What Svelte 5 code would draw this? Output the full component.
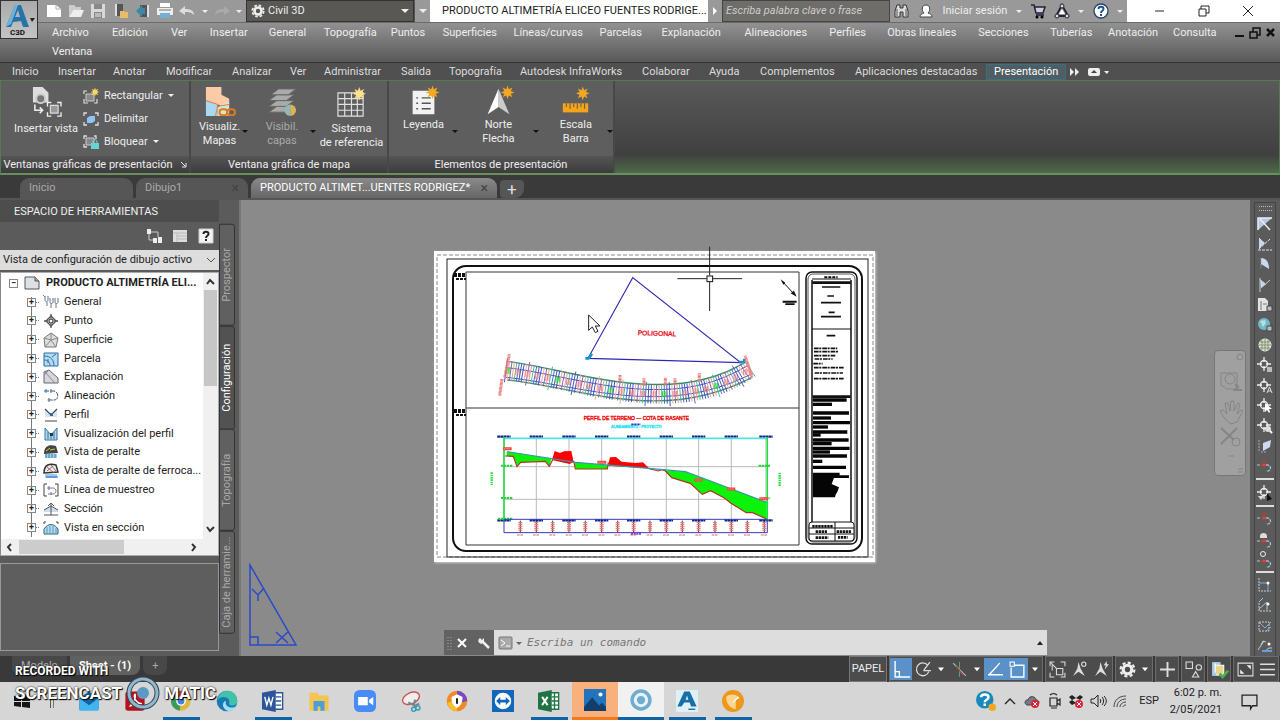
<script>
  const menus = ['Archivo', 'Edición', 'Ver', 'Insertar', 'General', 'Topografía', 'Puntos', 'Superficies', 'Líneas/curvas', 'Parcelas', 'Explanación', 'Alineaciones', 'Perfiles', 'Obras lineales', 'Secciones', 'Tuberías', 'Anotación', 'Consulta'];
  const ribbonTabs = ['Inicio', 'Insertar', 'Anotar', 'Modificar', 'Analizar', 'Ver', 'Administrar', 'Salida', 'Topografía', 'Autodesk InfraWorks', 'Colaborar', 'Ayuda', 'Complementos', 'Aplicaciones destacadas'];
  const quick = ['new', 'open', 'save', 'openweb', 'saveweb', 'print', 'undo', 'redo'];

  const tree = [
    ['General', 'general'],
    ['Punto', 'punto'],
    ['Superficie', 'superficie'],
    ['Parcela', 'parcela'],
    ['Explanación', 'explanacion'],
    ['Alineación', 'alineacion'],
    ['Perfil', 'perfil'],
    ['Visualización del perfil', 'visperfil'],
    ['Vista de peralte', 'peralte'],
    ['Vista de peralte de ferroca...', 'ferro'],
    ['Línea de muestreo', 'muestreo'],
    ['Sección', 'seccion'],
    ['Vista en sección', 'vseccion'],
  ];
  const sideTabs = ['Prospector', 'Configuración', 'Topografía', 'Caja de herramie...'];

  const tools = ['t1', 't2', 't3', 't4', 'tdoc', 'tearth', 'tglobe', 'pt1', 'pt2', 'pt3', 'pt4', 'tpen', 'arc', '-', 'pt5', '-', 'arc', 'arc2', 'arc3', '-', 'box1', 'box2', 'box3', 'box4'];

  const status = [
    [['ortho', 1], ['polar'], ['caret'], ['iso'], ['caret'], ['otrack', 1], ['osnap', 1], ['caret']],
    [['ascale'], ['avis'], ['aauto']],
    [['gear'], ['caret']],
    [['plus']],
    [['shapes']],
    [['perf']],
    [['full'], ['menu']],
  ];

  const apps = [
    ['mail', 'Correo', ''],
    ['pdf', 'Acrobat', ''],
    ['chrome', 'Chrome', 'run'],
    ['edge', 'Edge', ''],
    ['word', 'Word', 'run'],
    ['folder', 'Explorador', ''],
    ['zoom', 'Zoom', ''],
    ['snip', 'Recortes', ''],
    ['shield', 'Avast', ''],
    ['team', 'TeamViewer', ''],
    ['excel', 'Excel', 'run'],
    ['photos', 'Fotos', 'alert'],
    ['rec', 'Grabadora', 'front'],
    ['acad', 'Civil 3D', 'run'],
    ['gold', 'Monitor', 'run'],
  ];
  const tray = ['help', 'chev', 'cloud', 'meet', 'dropbox', 'volume', 'wifi'];

  const star = (x, y, r, c) => {
    let d = '';
    for (let i = 0; i < 16; i++) {
      const k = i % 2 ? r * 0.5 : r;
      const a = (i * Math.PI) / 8;
      d += `${x + k * Math.sin(a)},${y - k * Math.cos(a)} `;
    }
    return `<polygon points="${d}" fill="${c}"/>`;
  };
  const target = '<g fill="none" stroke="#eee" stroke-width="1.3"><circle cx="7" cy="7" r="3.5"/><path d="M7 0v5M7 9v5M0 7h5M9 7h5"/></g>';
  const arc = '<path d="M0 7h4M9 7c6-1 6 7 0 6" fill="none" stroke="#b8c4d4" stroke-width="1.2" stroke-dasharray="3 1"/><path d="M5 7h4" stroke="#e03c3c" stroke-width="2.5"/>';

  // All icons share a 16x16 box
  const icons = {
    new: '<path d="M1 2h9l5 4v8H1z" fill="#fff"/><path d="M10 2v4h5" fill="none" stroke="#aaa"/>',
    open: '<path d="M1 14V2h5l2 2h5v3H5z" fill="#ccc"/><path d="M5 7h11l-3 7H1z" fill="#eee"/>',
    save: '<path d="M1 1h14v14H1z" fill="#d8d8d8"/><path d="M4 1h8v5H4zM4 9h8v6H4z" fill="#888"/><path d="M5 11h6M5 13h6" stroke="#eee"/>',
    openweb: '<path d="M2 1h8v12H2z" fill="#555"/><path d="M2 1h2v12H2z" fill="#ddd"/><path d="M7 8h4l1 1h3v6H7z" fill="#e9bc68"/>',
    saveweb: '<path d="M5 2h9v12H5z" fill="#555"/><path d="M12 2h2v12h-2z" fill="#ddd"/><path d="M1 8l6-6v3h3v6H7v3z" fill="#3d88a8"/>',
    print: '<path d="M3 0h10v4H3z" fill="#fff"/><path d="M0 5h16v7H0z" fill="#eee"/><path d="M2 7h12" stroke="#777"/><path d="M3 10h10v5H3z" fill="#75afd5"/>',
    undo: '<path d="M0 8l6-5v3c6 0 9 2 9 6-3-3-5-3-9-3v3z" fill="#ddd"/>',
    redo: '<path d="M16 8l-6-5v3c-6 0-9 2-9 6 3-3 5-3 9-3v3z" fill="#aaa"/>',
    gear: '<circle cx="8" cy="8" r="4" fill="none" stroke="#eee" stroke-width="3"/><circle cx="8" cy="8" r="6.5" fill="none" stroke="#eee" stroke-width="2" stroke-dasharray="3 2.1"/>',
    caret: '<path d="M4 6h8l-4 5z" fill="#fff"/>',
    bino: '<path d="M3 2h3v3h3V2h3l2 6v6H9V9H6v5H1V8z" fill="#ddd" stroke="#333"/><path d="M3 6v7M12 6v7" stroke="#555"/>',
    user: '<path d="M2 14c0-3 2-3 4-4-3-3-2-8 2-8s5 5 2 8c2 1 4 1 4 4z" fill="#fff" stroke="#444"/>',
    cart: '<path d="M1 2h3l2 8h7l2-6H5M6 12h8" fill="#ccd" stroke="#223" stroke-width="1.5"/><circle cx="7" cy="14" r="1.5"/><circle cx="12" cy="14" r="1.5"/>',
    triad: '<path d="M8 2l6 11H2z" fill="none" stroke="#223" stroke-width="1.8"/><path d="M8 6l3 5H5z" fill="#fff"/><circle cx="8" cy="3" r="2" fill="#ddd" stroke="#223"/><circle cx="3" cy="13" r="2" fill="#ddd" stroke="#223"/><circle cx="13" cy="13" r="2" fill="#ddd" stroke="#223"/>',
    ask: '<circle cx="8" cy="8" r="7" fill="#fff" stroke="#24456d" stroke-width="1.3"/><path d="M5.500 6c0-3 5-3 5 0 0 2-2.500 1.500-2.500 4M8 11v2" fill="none" stroke="#1e4f8e" stroke-width="2"/>',
    addview: '<path d="M1 0h5l3 3v5H1z" fill="#ddd"/><circle cx="5" cy="6" r="2.300" fill="#777" stroke="#ccc"/><path d="M2 9v3h4M4.500 10.500L6 12l-1.500 1.500" fill="none" stroke="#eee" stroke-width=".8"/><path d="M10 9.500h4v4h-4z" fill="#999" stroke="#ddd" stroke-width=".6"/><path d="M8.500 10V8h2M13.500 8h2v2M15.500 13v2h-2M10.500 15h-2v-2" fill="none" stroke="#eee" stroke-width=".7"/>',
    rect: '<path d="M1 6V3h3M1 11v4h4M11 15h3v-4" fill="none" stroke="#ddd" stroke-width="1.2"/><path d="M3 6h8v7H3z" fill="#888" stroke="#ccc"/>' + star(12, 4, 4.5, '#ffd65c'),
    clip: '<path d="M1 5V2h3M12 2h3v3M15 11v3h-3M4 14H1v-3" fill="none" stroke="#ddd" stroke-width="1.3"/><path d="M4 7l3-2h5v5l-3 2H4z" fill="#8bc4f5"/>',
    lock: '<path d="M1 5V2h3M11 2h2v3M4 13H1v-3" fill="none" stroke="#ddd" stroke-width="1.3"/><path d="M3 4h8v7H3z" fill="#888" stroke="#ccc"/><path d="M10 9V8c0-3 4-3 4 0v1" fill="none" stroke="#6ed6da"/><path d="M8 9h8v6H8z" fill="#68d2d4"/>',
    maps: '<path d="M1 0h8v4l4 2v3c-5 1-7 0-12-2z" fill="#fbcba8"/><path d="M1 7l6 2v6H1z" fill="#a9d8f3"/><path d="M7 15v-4c1-2 4-3 6-3v7z" fill="#cfe8cf"/><path d="M1 7l6 2c0 3-1 4-1 6M7 10l6-1" fill="none" stroke="#e07a4a" stroke-width=".5"/><rect x="8" y="11.500" width="4" height="3" rx="1.500" fill="none" stroke="#e2781f"/><rect x="12" y="11.500" width="4" height="3" rx="1.500" fill="none" stroke="#e2781f"/>',
    layers: '<g fill="#aaa" stroke="#666" stroke-width=".5"><path d="M1 13l4-3h9l-4 3z"/><path d="M1 10l4-3h9l-4 3z"/><path d="M1 7l4-3h9l-4 3z"/><path d="M2 4l4-3h9l-4 3z"/></g><path d="M12 9a3 3 0 0 0 0 6z" fill="#92b8b8"/><path d="M12 9a3 3 0 0 1 0 6z" fill="#d6b35c"/>',
    grid: '<path d="M1 3h13v12H1zM1 6h13M1 9h13M1 12h13M4.500 3v12M8 3v12M11 3v12" fill="none" stroke="#e2e2e2" stroke-width=".6"/>' + star(12, 3.5, 3.5, '#ffdf87'),
    legend: '<path d="M2 2h9l3 3v10H2z" fill="#f2f2f2"/><path d="M7 6h5M7 9h5M7 12h5M4 6h1M4 9h1M4 12h1" stroke="#555" stroke-width=".8"/>' + star(13, 3, 3.8, '#f5a623'),
    north: '<path d="M8 1l6 14-6-4z" fill="#ccc"/><path d="M8 1L2 15l6-4z" fill="#fff"/>' + star(13, 3, 3.8, '#f5a623'),
    ruler: '<path d="M1 9h14v5H1z" fill="#f5a21c"/><path d="M3 9v2M5 9v3M7 9v2M9 9v3M11 9v2M13 9v3" stroke="#664" stroke-width=".6"/>' + star(12, 3.5, 3.8, '#f5a623'),
    page: '<path d="M1 2h10l4 4v8H1z" fill="#dde0e4" stroke="#555"/><path d="M11 2v4h4" fill="#aaa" stroke="#555"/>',
    general: '<g fill="none" stroke="#667889"><path d="M2 2v4c0 2 3 2 3 0V2M2 3L0 1M4 8v4M7 4v4c0 2 3 2 3 0V4M8 9v5M12 4v4c0 2 3 2 3 0V4M13 9v5"/></g>',
    punto: '<g fill="none" stroke="#555" stroke-width="1.3"><path d="M8 3l5 5-5 5-5-5z"/><circle cx="8" cy="8" r="2"/><path d="M8 1v4M8 11v4M1 8h4M11 8h4"/></g>',
    superficie: '<path d="M8 1l7 5-2 9H2L1 6z" fill="#ddd" stroke="#777"/><path d="M8 1v7l7-2M8 8l5 7M8 8l-6 7M8 8L1 6" fill="none" stroke="#888"/>',
    parcela: '<path d="M1 2h14v13H1z" fill="#b6dcf3" stroke="#2d6d9f"/><path d="M1 5c7 0 10 4 10 10M1 9c4 0 6 2 6 6M9 6l4-3M5 8v4" fill="none" stroke="#2d6d9f"/>',
    explanacion: '<path d="M1 3l5-2 9 8v5H1z" fill="#d5d7db" stroke="#667"/><path d="M2 3l10 11M6 1L1 6" stroke="#889"/>',
    alineacion: '<path d="M1 3h10c5 1 5 9 0 9H4" fill="none" stroke="#555" stroke-dasharray="5 1"/><path d="M3 1v4M8 1v4M6 10v4" stroke="#3475b5"/>',
    perfil: '<path d="M2 2l6 6 6-6v8H2z" fill="#d7e5f3"/><path d="M2 2l6 6 6-6M2 14h12" fill="none" stroke="#444" stroke-width="1.200"/><path d="M7 6h3v3H7z" fill="#356c9a"/>',
    visperfil: '<path d="M2 2v12h12V2L8 9z" fill="#afd9f1" stroke="#2f74a8"/><path d="M5 6v7M8 9v4M11 6v7" stroke="#2f74a8"/><path d="M7 7h3v3H7z" fill="#333"/>',
    peralte: '<path d="M1 10c0-8 5-10 12-8l2 7z" fill="#444"/><path d="M3 7l4-3M7 6l5-1" stroke="#d2ce46"/><path d="M2 10h12v4H2z" fill="#9dceef"/><path d="M3 10v4M6 10v4M9 10v4M12 10v4" stroke="#3d82b9"/>',
    ferro: '<path d="M1 10c0-8 5-10 12-8l2 7z" fill="#eee" stroke="#333" stroke-width="1.500"/><path d="M4 4l7 6M8 2l5 6M4 8l6-5" stroke="#966"/><path d="M2 11h12v4H2z" fill="#9dceef"/><path d="M3 14h12" stroke="#36c"/>',
    muestreo: '<path d="M4 2H1v12h3M12 2h3v12h-3" fill="none" stroke="#444"/><path d="M4 6h6c4 0 4 6 0 6H5" fill="none" stroke="#977"/><path d="M6 4v4M8 10v3" stroke="#46c"/>',
    seccion: '<path d="M1 9l7-4 7 4v2H1z" fill="#cdddeb"/><path d="M8 2v12M1 9l7-4 7 4M1 14h14M5 5l3-3 3 3" fill="none" stroke="#555"/>',
    vseccion: '<path d="M1 9c4-6 10-6 14 0v5H1z" fill="#b5daf0" stroke="#367"/><path d="M4 7v7M7 6v8M10 6v8M13 8v6" stroke="#569bc8"/><path d="M1 4V2h2M13 2h2v2" fill="none" stroke="#444"/>',
    treebtn: '<path d="M1 1h4v5H1zM7 10h4v5H7zM12 9h4v6h-4z" fill="#eee"/><path d="M5 4h7v5M3 6v6h4" fill="none" stroke="#ccc"/>',
    panel: '<path d="M1 2h14v12H1z" fill="#ddd"/><path d="M1 5h14M5 5v9M5 8h10M5 11h10" stroke="#bbb"/>',
    qbox: '<path d="M1 1h14v14H1z" fill="#f3f3f3" stroke="#ccc"/><path d="M5.500 6c0-3 5-3 5 0 0 2-2.500 1.500-2.500 4M8 11v2" fill="none" stroke="#222" stroke-width="2"/>',
    t1: '<path d="M1 2v12L15 2z" fill="#b9c8df"/><path d="M1 14V2h14M3 3l10 11" fill="none" stroke="#e6ecf6" stroke-width="1.500"/>',
    t2: '<path d="M2 2l6 5-6 6z" fill="#c9d6e9"/><path d="M2 2l6 6M2 13L13 3M1 14h14" fill="none" stroke="#dde" stroke-dasharray="3 1"/>',
    t3: '<path d="M4 2c6 0 8 5 8 11L4 8z" fill="#ccd8ec"/><path d="M4 2v10" stroke="#99a" stroke-dasharray="2 1"/>',
    t4: '<path d="M3 2l6 5-5 4z" fill="#c9d6e9"/><path d="M3 1v14M4 11l9-8" stroke="#c5ccd6"/>',
    tdoc: '<path d="M1 1h7l3 3v10H1z" fill="#e3e3e3"/><path d="M4 4v9M6 7h4" stroke="#777"/><path d="M10 9h5v5h-5z" fill="#bbb" stroke="#444"/>',
    tearth: '<circle cx="7" cy="7" r="6" fill="#6fb9cc"/><path d="M3 4l5-1 1 3-3 4z" fill="#b8e0d9"/><path d="M10 9h5v5h-5z" fill="#bbb" stroke="#444"/>',
    tglobe: '<circle cx="8" cy="8" r="6" fill="#d7dfcf" stroke="#eee"/><path d="M2 8h12M8 2v12M3 5h10M3 11h10M5 3v10M11 3v10" fill="none" stroke="#76835f" stroke-width=".8"/>',
    pt1: target + '<path d="M10 10h5v5h-5z" fill="#bbb"/>',
    pt2: target + '<path d="M10 15l2.500-6 2.500 6M11 13h3" fill="none" stroke="#ddd"/>',
    pt3: target + '<path d="M8 5v9l2-2 2 3 1-1-1-3h3z" fill="#fff"/>',
    pt4: target + '<circle cx="11" cy="11" r="3" fill="#ddd"/><path d="M13 13l2 2" stroke="#fff" stroke-width="2"/>',
    pt5: target + '<path d="M1 11h6l-3 4z" fill="#ddd"/><path d="M10 8v8l5-2z" fill="#111"/>',
    tpen: '<path d="M2 2v12M4 14h6" stroke="#aaa" stroke-dasharray="2 1"/><path d="M6 5l8-3-1 7-7 4z" fill="#ccd9ef"/>',
    arc: arc + '<path d="M7 1v4" stroke="#c33" stroke-width="1.500"/>',
    arc2: '<path d="M3 5c0-4 7-4 7 0v2H3z" fill="#ddd"/><g transform="translate(0 3)">' + arc + '</g>',
    arc3: '<circle cx="6" cy="3" r="2.500" fill="none" stroke="#eee"/><g transform="translate(0 3)">' + arc + '</g>',
    box1: '<path d="M2 1v13h12" fill="none" stroke="#ccc" stroke-dasharray="2 1"/><path d="M2 6h9v8" fill="none" stroke="#7db0de"/><circle cx="11" cy="6" r="1.500" fill="#fff"/>',
    box2: '<path d="M2 6v8h12" fill="none" stroke="#ccc" stroke-dasharray="2 1"/><path d="M2 12l8-7v8M2 5l4-4" fill="none" stroke="#a8c9e6"/><circle cx="11" cy="7" r="1.500" fill="#fff"/>',
    box3: '<path d="M2 4h10v9H2z" fill="none" stroke="#ccc" stroke-dasharray="2 1"/><path d="M3 5l5 5 6-6M9 13l5-4" fill="none" stroke="#7db0de"/>',
    box4: '<path d="M1 12l6-9M7 14l5-4h3M4 7l2-4 3 1" fill="none" stroke="#ccc"/><path d="M5 13h10" stroke="#5f9ee0" stroke-width="2"/><circle cx="12" cy="6" r="1.500" fill="#fff"/>',
    ortho: '<path d="M2 0v15h14M2 10h4v5" fill="none" stroke="#fff" stroke-width="1.300"/>',
    polar: '<path d="M12 4a6 6 0 1 0 1 6M8 9l6-8M8 9h7" fill="none" stroke="#ddd" stroke-width="1.200"/>',
    iso: '<path d="M2 2l12 12" stroke="#bbb"/><path d="M8 1v14" stroke="#5ba36a"/><path d="M5 5l6 8" stroke="#a44"/>',
    otrack: '<path d="M2 13L12 2M1 13h14" stroke="#fff" stroke-width="1.300"/>',
    osnap: '<path d="M4 4h10v11H2V6" fill="none" stroke="#fff" stroke-width="1.300"/><path d="M1 1h4v4H1z" fill="#5b91c9" stroke="#fff"/>',
    ascale: '<path d="M1 5V1h4M11 1h4v4M15 11v4h-4M5 15H1v-4" fill="none" stroke="#ddd"/><path d="M7 7h6v6H7zM1 1l6 6M3 9V4" fill="none" stroke="#ddd"/>',
    avis: '<path d="M7 1l2 6 4 7-6-4-5 4 4-7z" fill="#ddd"/><circle cx="12" cy="3" r="2" fill="none" stroke="#ddd"/>',
    aauto: '<path d="M7 1l2 6 4 7-6-4-5 4 4-7z" fill="#ddd"/><path d="M13 0l-3 4h2l-1 4 4-5h-2z" fill="#ddd"/>',
    plus: '<path d="M8 1v14M1 8h14" stroke="#ddd" stroke-width="1.800"/>',
    shapes: '<path d="M1 1h6v6H1zM7 15l3-5 3 5z" fill="none" stroke="#ddd"/><circle cx="13" cy="6" r="2.500" fill="none" stroke="#ddd"/>',
    perf: '<path d="M1 1h8v13H1z" fill="#a6cde9"/><path d="M4 2v9M3 4h9v9H5" stroke="#fff" fill="#e8d586"/><path d="M8 12l3 3 5-6" fill="none" stroke="#4cad54" stroke-width="2.500"/>',
    full: '<path d="M1 2h14v12H1z" fill="none" stroke="#ddd"/><path d="M9 4h4v4zM3 8v4h4z" fill="#eee"/>',
    menu: '<path d="M1 3h14M1 8h14M1 13h14" stroke="#ddd" stroke-width="1.500"/>',
    win: '<path d="M0 3l7-1v6H0zM8 2l8-1v7H8zM0 9h7v5l-7-1zM8 9h8v6l-8-1z" fill="#151515"/>',
    mail: '<path d="M1 6l7-5 7 5v8H1z" fill="#1464a5"/><path d="M1 6l7 5 7-5v9H1z" fill="#42b4ee"/>',
    pdf: '<rect x="1" y="1" width="14" height="14" rx="2" fill="#b5121b"/><path d="M4 12c3-2 5-7 4-9-1 0-1 6 5 7-4-1-7 1-9 2z" fill="none" stroke="#fff"/>',
    chrome: '<circle cx="8" cy="8" r="7" fill="#e0b93a"/><path d="M8 8L2 4a7 7 0 0 1 12 0z" fill="#d9493a"/><path d="M8 8L2 4a7 7 0 0 0 5 11z" fill="#3c9a56"/><circle cx="8" cy="8" r="3" fill="#4080e8" stroke="#fff"/>',
    edge: '<circle cx="8" cy="8" r="7.500" fill="#1679b8"/><path d="M1 8c1-10 14-10 14.500 0 0 4-6 4-6 2 1-3-1-5-4-5-2 0-4 1-4.500 3z" fill="#41c3a8"/><path d="M7 9c0 3 4 5 8 3-3 5-9 4-10-1 0-3 3-4 2-2z" fill="#a3dcef"/>',
    word: '<path d="M8 2h7v12H8z" fill="#fff" stroke="#2b579a"/><path d="M10 5h4M10 8h4M10 11h4" stroke="#2b579a"/><path d="M0 2l10-2v16L0 14z" fill="#2b579a"/><path d="M2 5l1.500 6L5 6l1.500 5L8 5" fill="none" stroke="#fff"/>',
    folder: '<path d="M1 2h6l1 2h7v11H1z" fill="#f4c651"/><path d="M4 8h8v7H9v-3H7v3H4z" fill="#4a9fdb"/>',
    zoom: '<rect width="16" height="16" rx="4" fill="#4a8cf7"/><path d="M3 5h7v6H3zM11 7l3-2v6l-3-2z" fill="#fff"/>',
    snip: '<ellipse cx="8" cy="6" rx="6.500" ry="4" transform="rotate(-25 8 6)" fill="#f2eeee" stroke="#c85555"/><path d="M6 9l4 2M10 11l1-4M10 12l4-2" stroke="#788" stroke-width="1.500"/><circle cx="10" cy="14" r="1.500" fill="none" stroke="#39b"/><circle cx="13" cy="13" r="1.500" fill="none" stroke="#39b"/>',
    shield: '<circle cx="8" cy="8" r="7.500" fill="#f08a24"/><path d="M8 .5a7.500 7.500 0 0 1 7.500 7.500l-7.500 2z" fill="#774bc1"/><path d="M8 15.500a7.500 7.500 0 0 1-7-6l7-3z" fill="#f6c12d"/><path d="M4 5l4-2 4 2c0 4-1 6-4 8-3-2-4-4-4-8z" fill="#fff"/><path d="M8 6v4" stroke="#222" stroke-width="1.500"/>',
    team: '<path d="M0 0h16v16H0z" fill="#1267bb"/><circle cx="8" cy="8" r="6" fill="#fff"/><path d="M3 8l3-3v2h4V5l3 3-3 3V9H6v2z" fill="#1267bb"/>',
    excel: '<path d="M8 2h7v12H8z" fill="#fff" stroke="#217346"/><path d="M10 5h5M10 8h5M10 11h5M12 2v12" stroke="#217346"/><path d="M0 2l10-2v16L0 14z" fill="#217346"/><path d="M3 5l4 6M7 5l-4 6" stroke="#fff" stroke-width="1.400"/>',
    photos: '<path d="M0 0h16v16H0z" fill="#2474bd"/><path d="M0 13l6-7 5 6 2-2 3 3v3H0z" fill="#123e6b"/><circle cx="12" cy="4" r="1.500" fill="#fff"/>',
    rec: '<circle cx="8" cy="8" r="6.500" fill="#e9f2f8" stroke="#6daed0" stroke-width="2.500"/><circle cx="8" cy="8" r="3" fill="#6daed0"/>',
    acad: '<path d="M0 0h16v16H0z" fill="#def1f8"/><path d="M1 12L6 1h4l5 11h-4l-1-3H6l-2 3zM7 7h2L8 4z" fill="#176fa5"/><path d="M9 14h5" stroke="#176fa5"/>',
    gold: '<circle cx="8" cy="8" r="8" fill="#ed971c"/><path d="M3 5c3-3 8-2 10 1l-3 1v7c-4-1-7-4-7-9z" fill="#fbd58d"/><path d="M8 9l4-4" stroke="#fff"/>',
    help: '<circle cx="7" cy="7" r="7" fill="#1689bd"/><path d="M4 5c0-3 6-3 6 0 0 2-3 2-3 4M7 10v2" fill="none" stroke="#fff" stroke-width="2"/><circle cx="13" cy="13" r="3" fill="#edaa21"/>',
    chev: '<path d="M3 11l5-5 5 5" fill="none" stroke="#222" stroke-width="1.300"/>',
    cloud: '<path d="M3 12c-4-2-1-6 1-5 1-5 8-4 8 0 4 0 4 5 0 5z" fill="#778" stroke="#444"/><circle cx="11" cy="11" r="4" fill="#d23"/><path d="M9 9l4 4M13 9l-4 4" stroke="#fff"/>',
    meet: '<path d="M4 5h7v8H4zM11 8l3-2v6l-3-2M4 2c2-2 5-2 7 0M5 15h6" fill="none" stroke="#222" stroke-width="1.200"/>',
    dropbox: '<path d="M1 4l3-2 4 3-4 2zM8 5l4-3 3 2-3 3zM1 9l3-2 4 3-4 2z" fill="#222"/><circle cx="11" cy="11" r="4" fill="#d23"/><path d="M9 9l4 4M13 9l-4 4" stroke="#fff"/>',
    volume: '<path d="M1 6h3l4-4v12l-4-4H1zM10 6c1 1 1 3 0 4M12 4c2 2 2 6 0 8M14 3c3 3 3 7 0 10" fill="none" stroke="#222"/>',
    wifi: '<path d="M2 14C2 7 7 3 14 3M5 14c0-5 4-8 9-8M8 14c0-3 3-5 6-5M11 14c0-1 1-2 3-2" fill="none" stroke="#444"/>',
    note: '<path d="M1 2h14v10h-4l-2 3v-3H1z" fill="none" stroke="#222" stroke-width="1.200"/>',
  };

  // Corridor strip: a cubic band with a cross line at each station
  const stations = Array.from({ length: 96 }, (_, i) => {
    const t = i / 95;
    const u = 1 - t;
    const x = u * u * u * 228 + 3 * u * u * t * 450 + 3 * u * t * t * 740 + t * t * t * 960;
    const y = u * u * u * 376 + 3 * u * u * t * 405 + 3 * u * t * t * 525 + t * t * t * 372;
    const dx = 3 * u * u * 222 + 6 * u * t * 290 + 3 * t * t * 220;
    const dy = 3 * u * u * 29 + 6 * u * t * 120 - 3 * t * t * 153;
    const l = Math.hypot(dx, dy);
    const h = i % 9 === 0 ? 36 : 28;
    return { x1: x - (dy / l) * h, y1: y + (dx / l) * h, x2: x + (dy / l) * h, y2: y - (dx / l) * h, x, y, c: ['#3a55d0', '#eaa', '#86a', '#e99', '#5b9', '#4a6ad8', '#55a'][i % 7] };
  });
  const verticals = [222, 319, 417, 515, 611, 709, 806, 904, 1008];
  const ticks = [271, 319, 368, 417, 466, 515, 563, 611, 660, 709, 757, 806, 855, 904, 952, 1003];
  const blackRows = [[0, 1250], [13, 1206], [39, 1257], [54, 1203], [68, 1260], [81, 1194], [96, 1252], [105, 1172], [120, 1256], [131, 1205], [145, 1259], [156, 1200], [168, 1251], [184, 1177], [202, 1248]];
</script>

{#snippet icon(name, size = 16)}
  <svg class="icon" width={size} height={size} viewBox="0 0 16 16" aria-hidden="true">{@html icons[name]}</svg>
{/snippet}

<div class="app">
  <header>
    <button class="app-button" aria-label="Menú de la aplicación">
      <svg width="30" height="26" viewBox="0 0 30 26" aria-hidden="true">
        <path d="M1 24L10 2h6l8 22h-6l-2-6-8 1-2 5zM10 14h5l-2-7z" fill="#2474a7" />
        <path d="M10 2h3L6 21l-5 3z" fill="#6fb4d8" />
        <path d="M25 15h5l-3 4z" fill="#222" />
      </svg>
      <span>C3D</span>
    </button>
    <div class="titlebar">
      <div class="quick">
        {#each quick as name}
          <button aria-label={name}>{@render icon(name)}</button>
          {#if name === 'undo' || name === 'redo'}<span class="down small"></span>{/if}
        {/each}
      </div>
      <div class="workspace">
        {@render icon('gear', 14)}
        <select aria-label="Espacio de trabajo"><option>Civil 3D</option></select>
        <span class="down"></span>
      </div>
      <button class="more" aria-label="Personalizar"><span class="down"></span></button>
      <div class="doc-title">PRODUCTO ALTIMETRÍA ELICEO FUENTES RODRIGE...</div>
      <span class="play"></span>
      <input class="search" aria-label="Buscar" placeholder="Escriba palabra clave o frase" />
      <div class="account">
        {@render icon('bino')}
        {@render icon('user')}
        <a href="#sesion">Iniciar sesión</a>
        <span class="down small"></span>
        {@render icon('cart')}
        {@render icon('triad')}
        <span class="down small"></span>
        {@render icon('ask')}
        <span class="down small"></span>
      </div>
      <div class="window-buttons">
        <button aria-label="Minimizar"><svg width="12" height="12"><path d="M1 6h9" stroke="#222" /></svg></button>
        <button aria-label="Restaurar"><svg width="12" height="12"><path d="M1 4h7v7H1zM3 4V1h8v7H8" fill="none" stroke="#222" /></svg></button>
        <button aria-label="Cerrar"><svg width="12" height="12"><path d="M1 1l10 10M11 1L1 11" stroke="#222" /></svg></button>
      </div>
    </div>
    <nav class="menubar">
      {#each menus as item}
        <button>{item}</button>
      {/each}
      <svg class="mdi" width="42" height="14" aria-hidden="true">
        <path d="M1 10h9" stroke="#111" stroke-width="2" /><path d="M16 6h7v6h-7zM19 6V2h7v7h-3" fill="none" stroke="#111" stroke-width="1.500" /><path d="M33 3l7 7M40 3l-7 7" stroke="#111" stroke-width="2.500" />
      </svg>
      <button class="second">Ventana</button>
    </nav>
  </header>

  <nav class="ribbon-tabs">
    {#each ribbonTabs as tab}
      <button>{tab}</button>
    {/each}
    <button class="current">Presentación</button>
    <svg width="40" height="12" aria-hidden="true"><path d="M0 2l4 4-4 4zM5 2l4 4-4 4zM34 5h5l-2 3z" fill="#eee" /><rect x="18" y="2" width="12" height="8" rx="2" fill="#eee" /><path d="M21 7h6l-3-3z" fill="#444" /></svg>
  </nav>

  <section class="ribbon">
    <div class="panel views">
      <div class="panel-body">
        <button class="big">{@render icon('addview', 31)}<span>Insertar vista</span></button>
        <div class="stack">
          <button>{@render icon('rect')}Rectangular<span class="down small"></span></button>
          <button>{@render icon('clip')}Delimitar</button>
          <button>{@render icon('lock')}Bloquear<span class="down small"></span></button>
        </div>
      </div>
      <h2>Ventanas gráficas de presentación <svg width="7" height="7" aria-hidden="true"><path d="M1 1l4 4M6 2v4H2" fill="none" stroke="#eee" /></svg></h2>
    </div>
    <div class="panel map">
      <div class="panel-body thirds">
        <button class="big drop">{@render icon('maps', 31)}<span>Visualiz.<br />Mapas</span></button>
        <button class="big drop dim">{@render icon('layers', 31)}<span>Visibil.<br />capas</span></button>
        <button class="big low">{@render icon('grid', 31)}<span>Sistema<br />de referencia</span></button>
      </div>
      <h2>Ventana gráfica de mapa</h2>
    </div>
    <div class="panel elements">
      <div class="panel-body thirds">
        <button class="big drop">{@render icon('legend', 29)}<span>Leyenda</span></button>
        <button class="big drop">{@render icon('north', 29)}<span>Norte<br />Flecha</span></button>
        <button class="big drop">{@render icon('ruler', 29)}<span>Escala<br />Barra</span></button>
      </div>
      <h2>Elementos de presentación</h2>
    </div>
  </section>

  <nav class="file-tabs">
    <button class="file start">Inicio</button>
    <button class="file draw">Dibujo1<span>×</span></button>
    <button class="file open">PRODUCTO ALTIMET...UENTES RODRIGEZ*<span>×</span></button>
    <button class="file add" aria-label="Nuevo">+</button>
  </nav>

  <main>
    <aside class="toolspace">
      <h1>ESPACIO DE HERRAMIENTAS</h1>
      <div class="tool-buttons">
        <button aria-label="Árbol">{@render icon('treebtn')}</button>
        <button aria-label="Panel">{@render icon('panel')}</button>
        <button aria-label="Ayuda">{@render icon('qbox')}</button>
      </div>
      <div class="view-select">
        <select aria-label="Vista"><option>Vista de configuración de dibujo activo</option></select>
        <svg width="9" height="6" aria-hidden="true"><path d="M1 1l4 4 4-4" fill="none" stroke="#555" /></svg>
      </div>
      <div class="tree">
        <ul>
          <li class="root"><span class="box">−</span>{@render icon('page')}<b>PRODUCTO ALTIMETRÍA ELI...</b></li>
          {#each tree as [label, name]}
            <li><span class="box">+</span><i></i>{@render icon(name)}<span class="label">{label}</span></li>
          {/each}
        </ul>
        <div class="vscroll">
          <svg width="9" height="7" aria-hidden="true"><path d="M1 5l3-4 4 4" fill="none" stroke="#333" stroke-width="2" /></svg>
          <div class="thumb"></div>
          <svg width="9" height="7" aria-hidden="true"><path d="M1 1l3 4 4-4" fill="none" stroke="#333" stroke-width="2" /></svg>
        </div>
        <div class="hscroll">
          <svg width="7" height="9" aria-hidden="true"><path d="M5 1L2 4l3 4" fill="none" stroke="#333" stroke-width="2" /></svg>
          <div class="thumb"></div>
          <svg width="7" height="9" aria-hidden="true"><path d="M2 1l3 3-3 4" fill="none" stroke="#333" stroke-width="2" /></svg>
        </div>
      </div>
      <div class="preview"></div>
    </aside>
    <nav class="side-tabs">
      {#each sideTabs as tab, i}
        <button class:current={i === 1}>{tab}</button>
      {/each}
    </nav>

    <section class="canvas">
      <svg class="sheet" width="441" height="311" viewBox="434 251 441 311" role="img" aria-label="Plano">
        <rect x="434" y="251" width="441" height="311" fill="#fff" />
        <rect x="437" y="255" width="436" height="302" fill="none" stroke="#888" stroke-dasharray="4 2" />
        <rect x="447" y="259" width="421" height="298" fill="none" stroke="#222" />
        <rect x="453" y="266" width="409" height="285" rx="13" fill="none" stroke="#111" stroke-width="2" />
        <path d="M466 272h333v273H466zM466 408h333" fill="none" stroke="#333" />
        <path d="M454 274h12M454 276h12M456 279h10M454 410h12M454 412h12M456 415h10" stroke="#111" stroke-width="2" stroke-dasharray="3 1" />

        <rect x="806" y="272" width="51" height="272" rx="6" fill="#fff" stroke="#111" stroke-width="1.500" />
        <rect x="808" y="274" width="47" height="268" rx="5" fill="none" stroke="#555" />
        <path d="M812 280V522M851 280V522" stroke="#111" stroke-width="1.500" />
        <rect x="809" y="522" width="45" height="19" rx="3" fill="#fff" stroke="#111" />
        <path d="M812 279h39M812 283h39M812 329h39M809 528h45M809 534h45M835 522v19" stroke="#111" />

        <g transform="translate(430 245) scale(.3333)">
          <path d="M1183 97h40" stroke="#111" stroke-width="6" stroke-dasharray="9 3" />
          <path d="M1176 126h55M1192 153h20M1173 173h60M1196 202h18M1173 215h60M1190 272h26" stroke="#111" stroke-width="5" />
          <path d="M1152 310h70M1152 320h75M1152 332h65M1154 342h54M1150 356h28M1152 368h90M1154 384h85M1152 401h90" stroke="#111" stroke-width="5" stroke-dasharray="14 2 6 3" />
          <path d="M1148 113h114M1148 455h114" stroke="#111" stroke-width="8" />
          <path d="M608 98L474 340l458 13z" fill="none" stroke="#2c27b5" stroke-width="3.500" />
          <path d="M466 340h10l10-14M928 351h15v-10" fill="none" stroke="#1593d5" stroke-width="8" />
          <path d="M1056 108l40 43" stroke="#111" stroke-width="3" />
          <path d="M1052 103l14 10-6 6zM1100 155l-18-10 10-8zM1058 167h42v6h-42zM1066 175h28v5h-28z" fill="#111" />
          <text x="623" y="270" font-size="20" fill="#e12" stroke="#e12" transform="rotate(2 623 270)">POLIGONAL</text>
          <path d="M232 405C450 425 690 540 965 398M238 350C430 375 720 490 945 352" fill="none" stroke="#3a8d60" stroke-width="4" />
          <path d="M228 397C450 420 700 520 962 388M232 368C450 395 720 505 952 362" fill="none" stroke="#3d55bb" stroke-width="3" />
          {#each stations as s, i}
            <line x1={s.x1} y1={s.y1} x2={s.x2} y2={s.y2} stroke={s.c} stroke-width="3" />
            {#if i % 4 === 1}
              <path d="M{s.x - 7} {s.y}h14" stroke={i % 5 === 1 ? '#2bdc2b' : '#e88'} stroke-width="18" stroke-dasharray="3 2" />
            {/if}
          {/each}
          <path d="M216 402l-7 50M238 328l-14 70M570 390v20M642 400v22M706 398v25M808 385v25M945 332l22 65M735 400v20" stroke="#ec7777" stroke-width="9" stroke-dasharray="3 1" />
          <path d="M839 5v86M839 111v87M742 101h88M848 101h88" stroke="#222" stroke-width="3" />
          <rect x="831" y="93" width="17" height="17" fill="#fff" stroke="#111" stroke-width="3" />
          <path d="M476 210v46l11-10 9 17 8-4-8-16h14z" fill="#fff" stroke="#222" stroke-width="3" />
        </g>

        <g transform="translate(430 400) scale(.3333)">
          <text x="461" y="61" font-size="15" fill="#e00" stroke="#e00">PERFIL DE TERRENO — COTA DE RASANTE</text>
          <text x="543" y="84" font-size="11" fill="#1ce0f0" stroke="#1ce0f0">ALINEAMIENTO : PROYECTO</text>
          <path d="M604 73h28" stroke="#33c" stroke-width="5" stroke-dasharray="7 2" />
          {#each verticals as x}
            <path d="M{x} 115V358" stroke="#bbb" stroke-width="3" />
            <path d="M{x - 20} 110h40M{x - 20} 361h40" stroke="#128" stroke-width="7" stroke-dasharray="8 1" />
          {/each}
          <path d="M222 200h790M222 298h790" stroke="#bbb" stroke-width="3" />
          <path d="M222 115h790" stroke="#55dfea" stroke-width="5" />
          <path d="M230 155L364 176L358 199L346 184L272 187L261 199L250 169L230 168zM434 187L534 196L532 207L436 207zM700 211L766 215L826 237L1010 307V357L968 338H949L903 310L883 294L842 272L817 283L781 250L725 233z" fill="#0bf20b" />
          <path d="M366 180l8-27 16 6 12-5 22-1 7 33-12 6zM534 197l6-25 18-1 17 14 42 4 22-2 18 18z" fill="#f00" />
          <path d="M225 168L250 169L261 200L272 187L346 184L358 199L368 179M431 183L436 207H532L535 187M655 205L685 213L693 209L705 211L725 233L781 250L817 283L842 272L883 294L903 310L949 338H968L1012 358" fill="none" stroke="#b4341d" stroke-width="3.500" />
          <path d="M232 155L437 187L657 205L766 215L826 237L1010 307" fill="none" stroke="#3496a8" stroke-width="3.500" />
          <path d="M222 112v250M1012 112v250" stroke="#17e237" stroke-width="4.500" />
          <path d="M185 217v38M1049 218v40" stroke="#2fdd3d" stroke-width="7" stroke-dasharray="5 2" />
          <path d="M213 197h36M213 294h34M204 356h45M986 197h36M1000 295h20" stroke="#28cf36" stroke-width="6" stroke-dasharray="7 2" />
          <path d="M219 146h26M502 187h27M793 240h25M891 267h25M988 296h26" stroke="#e44" stroke-width="9" />
          <path d="M222 146h20M505 187h20M796 240h20M893 267h20M991 296h20" stroke="#fbb" stroke-width="2" stroke-dasharray="4 3" />
          <path d="M222 358h790v40H222z" fill="none" stroke="#3437c8" stroke-width="3" />
          {#each ticks as x}
            <path d="M{x} 362v35" stroke="#111" stroke-width="2.500" />
            <path d="M{x} 366v26" stroke="#e77" stroke-width="12" stroke-dasharray="4 2" />
            <path d="M{x - 10} 405h20" stroke="#e99" stroke-width="4" stroke-dasharray="8 2" />
          {/each}
          <path d="M603 401h30" stroke="#93c" stroke-width="6" stroke-dasharray="6 2" />
          {#each blackRows as [y, x]}
            <path d="M1149 {y}H{x}" stroke="#050505" stroke-width="10" />
          {/each}
          <path d="M1149 218h80v8h28v8h-45l-3 8-4 10 22 10-4 12-6 10-2 8h-66z" fill="#050505" />
          <path d="M1147 379h62M1157 395h36M1157 413h38M1220 395h45M1224 412h29" stroke="#111" stroke-width="8" stroke-dasharray="7 2" />
        </g>
      </svg>

      <svg class="ucs" width="52" height="84" viewBox="0 0 52 84" fill="none" stroke="#2a49c9" stroke-width="1.500" aria-hidden="true">
        <path d="M3 1v80h46zM3 73h8v8M5 25l6 6 6-7M11 31v6M29 68l12 11M41 68L29 79" />
      </svg>

      <div class="navbar">
        <svg width="32" height="126" fill="none" stroke="#858585" stroke-width="1" aria-hidden="true">
          <circle cx="25" cy="6" r="3" /><path d="M6 22h16v12M6 22v12l6 4h8" /><circle cx="15" cy="28" r="5" /><path d="M20 33l3 3-3 3h7" stroke-width="2" />
          <path d="M10 68l-5-8 3-1 4 4-2-11 3 0 2 8 1-10 3 0 0 10 4-8 2 1-3 10 4-4 2 1-6 11-6 2z" />
          <path d="M6 77l13 12M22 77L6 93" stroke-width="2" /><circle cx="21" cy="91" r="4" /><path d="M14 105h5M23 118h5M23 121h5" />
        </svg>
      </div>

      <div class="command">
        <div class="command-handle">
          <svg width="46" height="14" aria-hidden="true">
            <path d="M1 1v13M4 1v13" stroke="#aaa" stroke-dasharray="1 2" /><path d="M11 3l8 8M19 3l-8 8" stroke="#fff" stroke-width="2" />
            <path d="M35 5l7 7" stroke="#eee" stroke-width="2.500" /><path d="M37 2l-2 2-2-2a3 3 0 1 0 4 4z" fill="#eee" />
          </svg>
        </div>
        <svg width="26" height="14" aria-hidden="true"><rect x="1" y="1" width="13" height="12" rx="1" fill="#aaa" stroke="#777" /><path d="M3 4l4 3-4 3M8 10h4" fill="none" stroke="#fff" /><path d="M18 6h6l-3 3z" fill="#666" /></svg>
        <input aria-label="Comando" placeholder="Escriba un comando" />
        <svg width="8" height="5" aria-hidden="true"><path d="M1 5h6L4 1z" fill="#222" /></svg>
      </div>
    </section>

    <nav class="draw-tools">
      <span class="grip"></span>
      {#each tools as t}
        {#if t === '-'}
          <hr />
        {:else}
          <button aria-label={t}>{@render icon(t)}</button>
        {/if}
      {/each}
    </nav>
  </main>

  <section class="statusbar">
    <div class="layouts">
      <button>Modelo</button>
      <button class="current">Sheet - (1)</button>
      <button>+</button>
    </div>
    <div class="status">
      <button class="paper">PAPEL</button>
      {#each status as group}
        <div class="group">
          {#each group as [name, on]}
            <button class:on class:narrow={name === 'caret'} aria-label={name}>{@render icon(name, name === 'caret' ? 12 : 17)}</button>
          {/each}
        </div>
      {/each}
    </div>
  </section>

  <footer>
    <button class="win" aria-label="Inicio">{@render icon('win')}</button>
    <span class="taskview"></span>
    {#each apps as [name, label, state]}
      <button class="task {state}" aria-label={label}>{@render icon(name, 22)}</button>
    {/each}
    <div class="tray">
      {#each tray as name}
        {@render icon(name, name === 'help' ? 20 : 16)}
      {/each}
      <span>ESP</span>
      <time>6:02 p. m.<br />2/05/2021</time>
      {@render icon('note', 17)}
    </div>
    <div class="watermark">
      <small>RECORDED WITH</small>
      <div>
        <span>SCREENCAST</span>
        <svg width="34" height="40" viewBox="0 0 34 40" aria-hidden="true"><circle cx="17" cy="20" r="14" fill="none" stroke="#35454f" stroke-width="5" /><circle cx="17" cy="20" r="14" fill="none" stroke="#8fb7d0" stroke-width="3" /><circle cx="17" cy="20" r="6" fill="#5b9ac4" /></svg>
        <span>MATIC</span>
      </div>
    </div>
  </footer>
</div>

<style>
  :global(body) {
    margin: 0;
    background: #3a3a3a;
  }
  .app {
    display: flex;
    flex-direction: column;
    height: 100vh;
    min-height: 720px;
    overflow: hidden;
    font-family: Roboto, "Open Sans", sans-serif;
    font-size: 11px;
    line-height: 14px;
    color: #eee;
  }
  button,
  input,
  select {
    font: inherit;
    color: inherit;
    background: none;
    border: 0;
    padding: 0;
    margin: 0;
    white-space: nowrap;
    appearance: none;
    min-width: 0;
  }
  svg {
    flex: none;
    display: block;
    overflow: visible;
  }
  h1,
  h2 {
    margin: 0;
    font-size: 11px;
    font-weight: 400;
  }
  .down {
    border: 4px solid transparent;
    border-top: 4px solid #eee;
    border-bottom: 0;
    flex: none;
  }
  .down.small {
    border-width: 3px;
    border-bottom: 0;
  }
  header {
    position: relative;
    background: linear-gradient(#919191, #8f8f8f 25px, #585858 62px);
  }
  .app-button {
    position: absolute;
    left: 0;
    top: 0;
    width: 38px;
    height: 39px;
    padding: 2px 4px;
    background: linear-gradient(#aaa, #c4c4c4);
    border: 1px solid #333;
    color: #111;
    font-size: 8px;
    font-weight: 700;
    line-height: 8px;
    text-align: left;
  }
  .app-button span {
    padding-left: 5px;
  }
  .titlebar {
    display: flex;
    align-items: stretch;
    height: 23px;
    padding-left: 38px;
    background: #999;
    border-bottom: 1px solid #6b6b6b;
    box-sizing: border-box;
  }
  .quick {
    display: flex;
    align-items: center;
    justify-content: space-between;
    width: 208px;
    padding: 0 4px 0 8px;
    box-sizing: border-box;
  }
  .workspace {
    position: relative;
    display: flex;
    align-items: center;
    gap: 3px;
    width: 168px;
    padding: 0 4px;
    box-sizing: border-box;
    background: #595854;
    border: 1px solid #333;
  }
  .workspace select {
    flex: 1;
  }
  .more {
    width: 16px;
    display: flex;
    align-items: center;
    justify-content: center;
    border-left: 1px solid #555;
  }
  .doc-title {
    flex: 1;
    padding-left: 12px;
    background: #fff;
    color: #222;
    line-height: 22px;
    white-space: nowrap;
    overflow: hidden;
  }
  .play {
    align-self: center;
    border: 4px solid transparent;
    border-left-color: #fff;
    border-right: 0;
    margin: 0 5px;
  }
  .search {
    width: 168px;
    padding-left: 3px;
    box-sizing: border-box;
    background: #6e6d6a;
    border: 1px solid #444;
  }
  .search::placeholder {
    color: #ccc;
    font-style: italic;
    opacity: 1;
  }
  .account {
    display: flex;
    align-items: center;
    width: 237px;
    padding: 0 4px;
    box-sizing: border-box;
    justify-content: space-between;
  }
  .account a {
    color: #eee;
    text-decoration: none;
  }
  .window-buttons {
    display: grid;
    grid-template-columns: repeat(3, 44px);
    justify-content: center;
    width: 153px;
    background: #fff;
    flex: none;
  }
  .window-buttons button {
    display: grid;
    place-items: center;
  }
  .menubar {
    display: grid;
    grid-template-columns: 60fr 59fr 39fr 59fr 55fr 67fr 52fr 71fr 86fr 62fr 83fr 85fr 58fr 91fr 72fr 58fr 65fr 61fr 41fr;
    grid-auto-rows: 19px;
    padding: 0 4px 1px 52px;
    align-items: center;
    justify-items: start;
  }
  .menubar .mdi {
    grid-row: 1;
    grid-column: 19;
  }
  .menubar .second {
    grid-row: 2;
    grid-column: 1;
  }
  .ribbon-tabs {
    display: grid;
    grid-template-columns: 46fr 55fr 53fr 66fr 58fr 34fr 77fr 48fr 71fr 122fr 67fr 51fr 95fr 131fr 84fr 210fr;
    align-items: center;
    justify-items: start;
    height: 18px;
    padding-left: 12px;
    background: #505050;
    border-top: 1px solid #333;
    box-sizing: border-box;
    color: #ddd;
  }
  .ribbon-tabs .current {
    padding: 0 7px;
    background: #505d63;
    border: 1px solid #397080;
    color: #fff;
  }
  .ribbon {
    display: flex;
    height: 95px;
    box-sizing: border-box;
    border: 1px solid #547b4d;
    border-bottom: 2px solid #68905f;
    background: linear-gradient(#5a5a5a, #404040 80%, #4d6a47);
  }
  .panel {
    display: flex;
    flex-direction: column;
    flex: none;
    background: #5e5e5e;
    border-right: 2px solid #484848;
    box-sizing: border-box;
  }
  .views {
    width: 190px;
  }
  .map {
    width: 198px;
  }
  .elements {
    width: 226px;
  }
  .panel h2 {
    display: flex;
    align-items: center;
    justify-content: center;
    gap: 7px;
    height: 17px;
    background: linear-gradient(#555, #3c3c3c);
    white-space: nowrap;
  }
  .panel-body {
    flex: 1;
    display: flex;
  }
  .thirds {
    display: grid;
    grid-template-columns: 57fr 68fr 71fr;
  }
  .elements .thirds {
    grid-template-columns: 67fr 78fr 72fr;
  }
  .big {
    position: relative;
    display: flex;
    flex-direction: column;
    align-items: center;
    gap: 2px;
    padding-top: 6px;
    line-height: 14px;
  }
  .views .big,
  .big.low {
    gap: 4px;
  }
  .views .big {
    width: 82px;
    padding-left: 8px;
  }
  .drop::after {
    content: "";
    position: absolute;
    right: 0;
    top: 49px;
    border: 3px solid transparent;
    border-top-color: #111;
    border-bottom: 0;
  }
  .dim {
    color: #aaa;
  }
  .stack {
    display: flex;
    flex-direction: column;
    justify-content: space-around;
    padding: 3px 0;
  }
  .stack button {
    display: flex;
    align-items: center;
    gap: 5px;
  }
  .file-tabs {
    display: flex;
    align-items: end;
    gap: 3px;
    height: 25px;
    padding: 0 20px;
    box-sizing: border-box;
    background: #3a3a3a;
    border-bottom: 2px solid #555;
  }
  .file {
    display: flex;
    justify-content: space-between;
    align-items: center;
    height: 20px;
    padding: 0 9px;
    background: #565656;
    border-radius: 9px 9px 0 0;
    color: #aaa;
    box-sizing: border-box;
  }
  .file span {
    color: #444;
    font-size: 14px;
  }
  .start {
    width: 113px;
  }
  .draw {
    width: 112px;
  }
  .file.open {
    width: 246px;
    background: linear-gradient(#8a8a8a, #666);
    color: #fff;
  }
  .file.add {
    width: 24px;
    height: 18px;
    padding: 0 7px;
    color: #ddd;
    font-size: 17px;
    border-radius: 4px 4px 9px 4px;
  }
  main {
    display: flex;
    flex: 1;
    min-height: 0;
    background: #5b5b5b;
  }
  .toolspace {
    display: flex;
    flex-direction: column;
    width: 219px;
    flex: none;
  }
  .toolspace h1 {
    padding: 5px 14px 3px;
    background: #4d4d4d;
  }
  .tool-buttons {
    display: flex;
    justify-content: end;
    gap: 10px;
    padding: 6px 5px;
  }
  .view-select {
    display: flex;
    align-items: center;
    justify-content: space-between;
    padding: 1px 4px 1px 3px;
    height: 18px;
    background: #ddd;
    color: #222;
  }
  .view-select select {
    flex: 1;
  }
  .tree {
    display: grid;
    grid-template-columns: 1fr 15px;
    grid-template-rows: 266px 16px;
    margin-top: 2px;
    background: #fff;
    border: 1px solid #aaa;
    border-left-color: #888;
    color: #222;
  }
  .tree ul {
    display: grid;
    grid-auto-rows: 1fr;
    height: 263px;
    margin: 0;
    padding: 1px 0 0;
    list-style: none;
    background: linear-gradient(#777, #777) 30px 24px / 1px 240px no-repeat;
  }
  .tree li {
    display: flex;
    align-items: center;
    padding-left: 26px;
    gap: 4px;
    white-space: nowrap;
  }
  .tree li i {
    width: 3px;
    margin-left: -4px;
    border-top: 1px dotted #777;
  }
  .tree .label {
    padding-left: 1px;
  }
  .tree .root {
    padding-left: 8px;
    gap: 6px;
  }
  .box {
    width: 7px;
    height: 7px;
    border: 1px solid #888;
    background: #fff;
    line-height: 7px;
    text-align: center;
    font-weight: 700;
    font-size: 9px;
  }
  .vscroll {
    display: flex;
    flex-direction: column;
    align-items: center;
    background: #f0f0f0;
    padding: 6px 0;
    box-sizing: border-box;
  }
  .vscroll .thumb {
    width: 13px;
    height: 96px;
    margin: 4px 0 auto;
    background: #c6c6c6;
  }
  .hscroll {
    display: flex;
    align-items: center;
    gap: 6px;
    grid-column: 1 / -1;
    background: #f0f0f0;
    padding: 0 21px 0 5px;
  }
  .hscroll .thumb {
    width: 105px;
    height: 14px;
    margin-right: auto;
    background: #ccc;
  }
  .preview {
    flex: 1;
    margin: 7px 0 5px;
    background: #5e5e5e;
    border: 1px solid #999;
  }
  .side-tabs {
    display: grid;
    grid-template-rows: 102fr 104fr 102fr 103fr;
    width: 22px;
    flex: none;
    padding: 24px 4px 22px 0;
    box-sizing: border-box;
    border-right: 2px solid #777;
  }
  .side-tabs button {
    writing-mode: vertical-rl;
    transform: rotate(180deg);
    border: 1px solid #333;
    border-radius: 3px 0 0 3px;
    background: #606060;
    color: #aaa;
  }
  .side-tabs .current {
    background: #525252;
    color: #fff;
  }
  .canvas {
    position: relative;
    flex: 1;
    min-width: 0;
    background: #8a8a8a;
  }
  .sheet {
    position: absolute;
    left: 193px;
    top: 51px;
    box-shadow: 1px 1px 2px #ccc;
  }
  .sheet text {
    font-family: "Liberation Sans", Arial, sans-serif;
  }
  .ucs {
    position: absolute;
    left: 6px;
    bottom: 8px;
  }
  .navbar {
    position: absolute;
    right: 4px;
    top: 150px;
    background: #a0a0a0;
    border: 1px solid #777;
    border-radius: 4px;
    box-sizing: border-box;
    width: 32px;
    height: 126px;
  }
  .command {
    position: absolute;
    left: 203px;
    right: 203px;
    bottom: 1px;
    display: flex;
    align-items: center;
    height: 25px;
    background: #ddd;
    padding-right: 3px;
  }
  .command-handle {
    display: flex;
    align-items: center;
    align-self: stretch;
    width: 47px;
    padding-left: 3px;
    margin-right: 4px;
    background: #626262;
  }
  .command input {
    flex: 1;
    padding-left: 3px;
    font-family: "DejaVu Sans Mono", "Liberation Mono", monospace;
    font-style: italic;
  }
  .command input::placeholder {
    color: #777;
    opacity: 1;
  }
  .draw-tools {
    display: flex;
    flex-direction: column;
    align-items: center;
    width: 22px;
    margin: 2px 4px 0 4px;
    border: 1px solid #444;
    border-bottom: 0;
    box-sizing: border-box;
    flex: none;
    overflow: hidden;
  }
  .draw-tools button {
    flex: 1 1 20px;
    display: flex;
    align-items: center;
  }
  .grip {
    width: 13px;
    height: 5px;
    margin: 3px 0;
    border-top: 1px dotted #bbb;
    border-bottom: 1px dotted #bbb;
    box-sizing: border-box;
    flex: none;
  }
  .draw-tools hr {
    width: 18px;
    height: 2px;
    margin: 2px 0;
    border: 0;
    background: #ddd;
    flex: none;
  }
  .statusbar {
    display: flex;
    justify-content: space-between;
    height: 26px;
    background: #393939;
    flex: none;
  }
  .layouts {
    display: flex;
    align-items: start;
    padding-left: 12px;
    gap: 3px;
  }
  .layouts button {
    height: 19px;
    padding: 0 9px;
    background: #484848;
    color: #aaa;
    border-radius: 0 0 8px 8px;
  }
  .layouts .current {
    background: #606060;
    color: #fff;
    font-weight: 700;
  }
  .status {
    display: flex;
    gap: 2px;
    padding-right: 1px;
  }
  .status .paper {
    width: 38px;
    background: #4c4c4c;
    border: 1px solid #777;
  }
  .group {
    display: flex;
    align-items: center;
    background: #4c4c4c;
    border: 1px solid #6c6c6c;
    box-sizing: border-box;
  }
  .group button {
    width: 22px;
    height: 22px;
    display: grid;
    place-items: center;
  }
  .group .narrow {
    width: 14px;
  }
  .group .on {
    background: #5b91c9;
  }
  footer {
    position: relative;
    display: flex;
    align-items: stretch;
    height: 38px;
    background: #d6d6d6;
    color: #222;
    flex: none;
  }
  .win {
    width: 44px;
    display: grid;
    place-items: center;
  }
  .taskview {
    width: 4px;
    height: 12px;
    margin: 14px 12px 0 6px;
    border-left: 1px solid #555;
    border-right: 1px solid #777;
    box-sizing: border-box;
  }
  .task {
    width: 46px;
    display: grid;
    place-items: center;
  }
  .task.run {
    background: linear-gradient(#0f63a9, #0f63a9) center bottom / 37px 3px no-repeat;
  }
  .task.alert {
    background: #f8b07c;
    border-bottom: 3px solid #f27a1d;
  }
  .task.front {
    background: #f1f1f1;
    border-bottom: 3px solid #0f63a9;
  }
  .tray {
    display: flex;
    align-items: center;
    gap: 6px;
    margin-left: auto;
    padding-right: 22px;
  }
  .tray span {
    padding-left: 5px;
  }
  .tray time {
    width: 57px;
    line-height: 17px;
    text-align: right;
    padding-right: 13px;
  }
  .watermark {
    position: absolute;
    left: 15px;
    bottom: 9px;
    color: #fff;
    font-weight: 700;
    text-shadow: 1px 1px 1px #000, 0 0 2px #000;
    pointer-events: none;
  }
  .watermark small {
    display: block;
    font-size: 12px;
    line-height: 8px;
  }
  .watermark div {
    display: flex;
    align-items: center;
    gap: 4px;
    height: 36px;
    font-size: 17px;
  }
</style>
